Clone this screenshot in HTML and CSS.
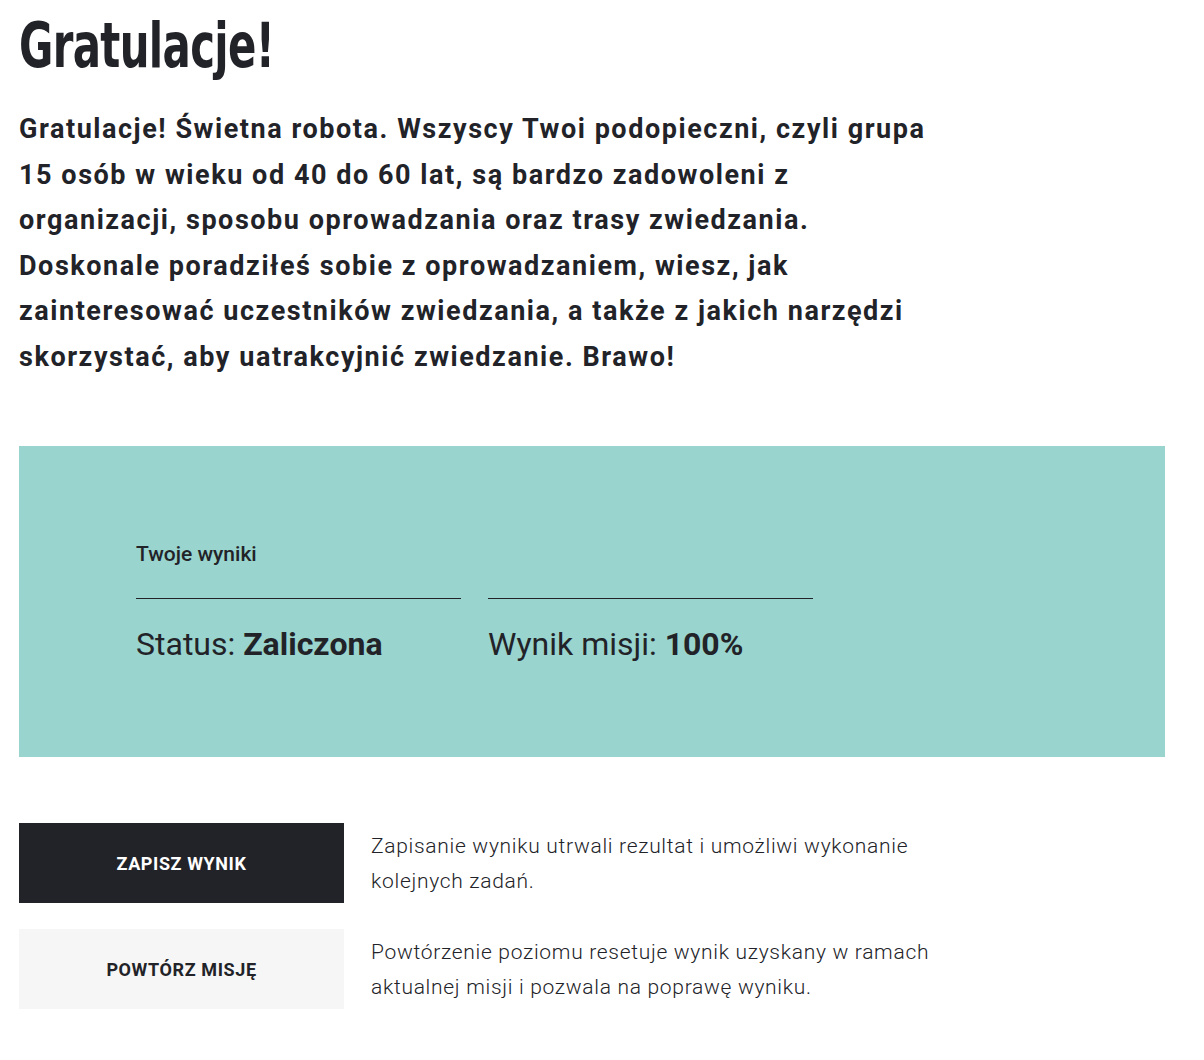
FILE: index.html
```html
<!DOCTYPE html>
<html lang="pl">
<head>
    <meta charset="UTF-8">
    <meta name="viewport" content="width=device-width, initial-scale=1.0">
    <title>Gratulacje!</title>
    <link rel="stylesheet" href="styles.css">
</head>
<body>
    <div class="page">
        <h1 class="title">Gratulacje!</h1>
        <p class="lead">Gratulacje! Świetna robota. Wszyscy Twoi podopieczni, czyli grupa 15 osób w wieku od 40 do 60 lat, są bardzo zadowoleni z organizacji, sposobu oprowadzania oraz trasy zwiedzania. Doskonale poradziłeś sobie z oprowadzaniem, wiesz, jak zainteresować uczestników zwiedzania, a także z jakich narzędzi skorzystać, aby uatrakcyjnić zwiedzanie. Brawo!</p>

        <div class="results">
            <div class="results-label">Twoje wyniki</div>
            <div class="results-row">
                <div class="result">Status: <b>Zaliczona</b></div>
                <div class="result">Wynik misji: <b>100%</b></div>
            </div>
        </div>

        <div class="actions">
            <div class="action">
                <button class="btn btn-dark">Zapisz wynik</button>
                <p class="action-text">Zapisanie wyniku utrwali rezultat i umożliwi wykonanie kolejnych zadań.</p>
            </div>
            <div class="action">
                <button class="btn btn-light">Powtórz misję</button>
                <p class="action-text">Powtórzenie poziomu resetuje wynik uzyskany w ramach aktualnej misji i pozwala na poprawę wyniku.</p>
            </div>
        </div>
    </div>
</body>
</html>
```

FILE: styles.css
```css
body,h1,p{
    margin: 0;
    padding: 0;
}
body{
    background: #fff;
    color: #222328;
    font-family: Roboto, "Liberation Sans", sans-serif;
}
.page{
    padding: 11px 39px 40px 19px;
}
.title{
    font-family: "DejaVu Sans", sans-serif;
    font-weight: 700;
    font-size: 63px;
    line-height: 70px;
    letter-spacing: -1px;
    transform: scaleX(0.665);
    transform-origin: left center;
    /* narrow display face imitated by squeezing */
}
.lead{
    margin-top: 26px;
    max-width: 925px;
    font-size: 27px;
    font-weight: 700;
    line-height: 45.5px;
    letter-spacing: 1.55px;
}
.results{
    margin-top: 66px;
    background: #99d4ce;
    padding: 96px 117px 94px 117px;
}
.results-label{
    font-size: 21px;
    font-weight: 500;
    line-height: 24px;
}
.results-row{
    display: flex;
    gap: 27px;
    margin-top: 32px;
}
.result{
    width: 325px;
    border-top: 1px solid #222328;
    padding-top: 26px;
    font-size: 32px;
    line-height: 38px;
}
.result b{
    font-weight: 700;
}
.actions{
    margin-top: 66px;
    display: flex;
    flex-direction: column;
    gap: 26px;
}
.action{
    display: flex;
    align-items: flex-start;
    gap: 27px;
}
.btn{
    flex: none;
    width: 325px;
    height: 80px;
    border: 0;
    font-family: Roboto, "Liberation Sans", sans-serif;
    font-size: 18px;
    font-weight: 700;
    letter-spacing: 0.6px;
    text-transform: uppercase;
    cursor: pointer;
}
.btn-dark{
    background: #222328;
    color: #fff;
}
.btn-light{
    background: #f6f6f6;
    color: #222328;
}
.action-text{
    max-width: 580px;
    padding-top: 6px;
    font-size: 21px;
    font-weight: 300;
    line-height: 35px;
    letter-spacing: 0.7px;
}
```
